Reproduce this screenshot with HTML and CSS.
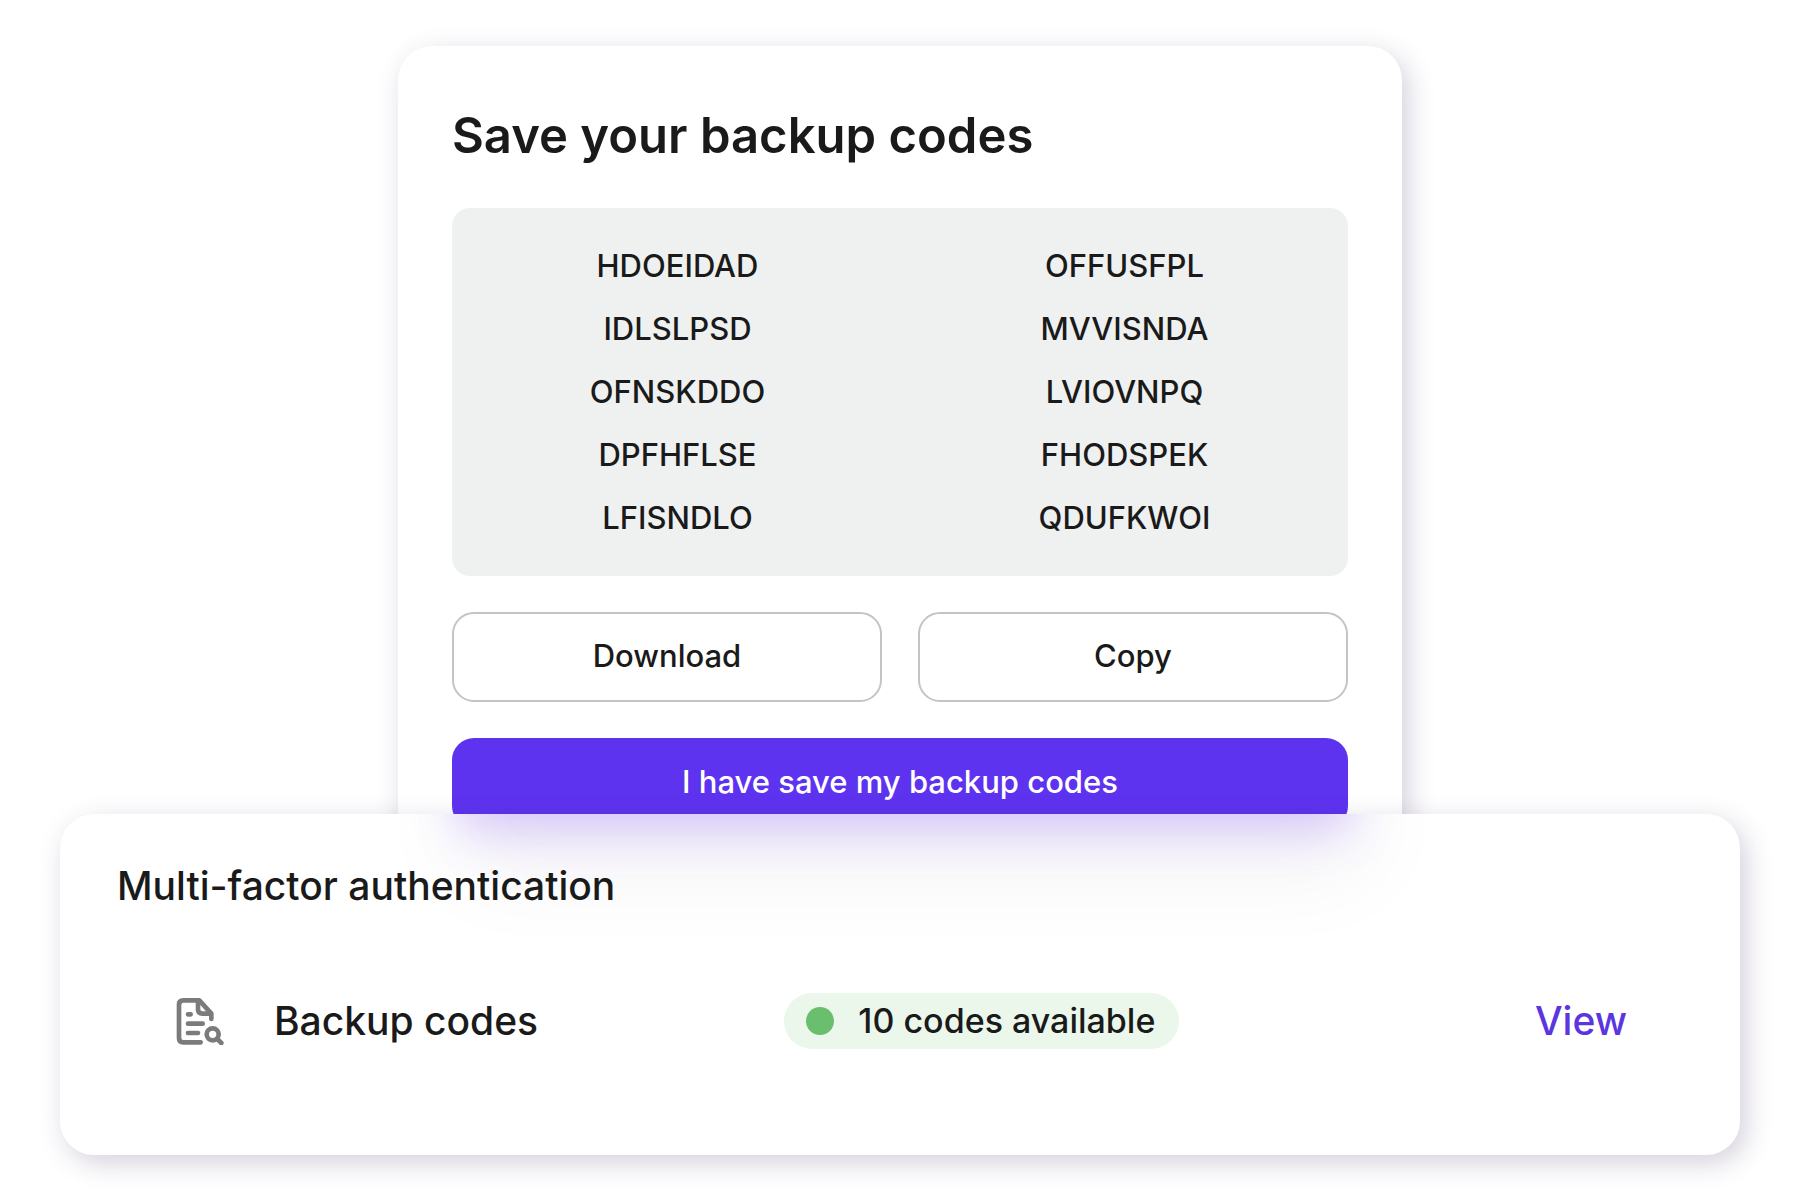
FILE: index.html
```
<!DOCTYPE html>
<html lang="en">
<head>
    <meta charset="UTF-8">
    <title>Backup codes</title>
    <link rel="stylesheet" href="styles.css">
</head>
<body>

<main class="page">
    <section class="codes-card">
        <h1>Save your backup codes</h1>
        <ul class="codes">
            <li>HDOEIDAD</li>
            <li>OFFUSFPL</li>
            <li>IDLSLPSD</li>
            <li>MVVISNDA</li>
            <li>OFNSKDDO</li>
            <li>LVIOVNPQ</li>
            <li>DPFHFLSE</li>
            <li>FHODSPEK</li>
            <li>LFISNDLO</li>
            <li>QDUFKWOI</li>
        </ul>
        <div class="actions">
            <button type="button" class="button">Download</button>
            <button type="button" class="button">Copy</button>
            <button type="button" class="button primary">I have save my backup codes</button>
        </div>
    </section>

    <section class="mfa-card">
        <h2>Multi-factor authentication</h2>
        <div class="method">
            <svg class="icon" viewBox="48 52 144 144" aria-hidden="true">
                <path d="M122 188H70Q57 188 57 175V75Q57 62 70 62H118L154 102V118"/>
                <path d="M114 64V89Q114 102 127 102H152"/>
                <path d="M84 104H92M84 132H128M84 160H114"/>
                <circle cx="158" cy="164" r="18"/>
                <path d="M171 177L184 190"/>
            </svg>
            <span class="name">Backup codes</span>
            <span class="status">10 codes available</span>
            <a class="view" href="#view">View</a>
        </div>
    </section>
</main>

</body>
</html>
```
FILE: styles.css
```
* {
    box-sizing: border-box;
}

body {
    margin: 0;
    background: #fff;
    color: #1a1a1a;
    font-family: Inter, sans-serif;
    font-weight: 500;
}

.page {
    padding: 46px 60px;
}

.codes-card,
.mfa-card {
    background: #fff;
    border-radius: 34px;
    box-shadow: 6px 8px 28px rgba(40, 20, 80, 0.2);
}

.codes-card {
    max-width: 1004px;
    margin: 0 auto;
    padding: 58px 54px 54px;
}

h1 {
    margin: 0 0 40px;
    font-size: 49px;
    font-weight: 600;
    line-height: 64px;
}

.codes {
    display: grid;
    grid-template-columns: 1fr 1fr;
    margin: 0 0 36px;
    padding: 26px 0 27px 2px;
    list-style: none;
    text-align: center;
    font-size: 31px;
    line-height: 63px;
    background: #eff1f1;
    border-radius: 18px;
}

.actions {
    display: grid;
    grid-template-columns: 1fr 1fr;
    gap: 36px;
}

.button {
    height: 90px;
    padding: 0 0 4px;
    border: 2px solid #c4c4c4;
    border-radius: 22px;
    background: #fff;
    color: inherit;
    font: inherit;
    font-size: 31px;
}

.primary {
    grid-column: 1 / 3;
    border: 0;
    background: #5e33f0;
    color: #fff;
}

.mfa-card {
    position: relative;
    overflow: hidden;
    margin-top: -68px;
    padding: 47px 57px 106px;
}

/* glow of the primary button falling on this card */
.mfa-card:before {
    content: '';
    position: absolute;
    top: -90px;
    left: 0;
    right: 0;
    width: 896px;
    height: 90px;
    margin: 0 auto;
    border-radius: 22px;
    box-shadow: 4px 14px 48px rgba(110, 50, 250, 0.26), 12px 50px 90px 10px rgba(40, 20, 80, 0.05);
}

h2 {
    position: relative;
    margin: 0;
    font-size: 39px;
    font-weight: 500;
    line-height: 50px;
}

.method {
    display: grid;
    grid-template-columns: 98px 17fr 25fr auto;
    align-items: center;
    margin-top: 82px;
    padding: 0 56px 0 59px;
    font-size: 39px;
    line-height: 56px;
}

.icon {
    width: 48px;
    height: 48px;
    fill: none;
    stroke: #7b7b7b;
    stroke-width: 14;
    stroke-linecap: round;
    stroke-linejoin: round;
}

.status {
    display: flex;
    align-items: center;
    justify-self: start;
    gap: 24px;
    padding: 0 24px 0 22px;
    border-radius: 28px;
    background: #eaf7ea;
    font-size: 34px;
}

.status:before {
    content: '';
    width: 28px;
    height: 28px;
    border-radius: 50%;
    background: #69bf6e;
}

.view {
    color: #5b36e0;
    text-decoration: none;
}
```
